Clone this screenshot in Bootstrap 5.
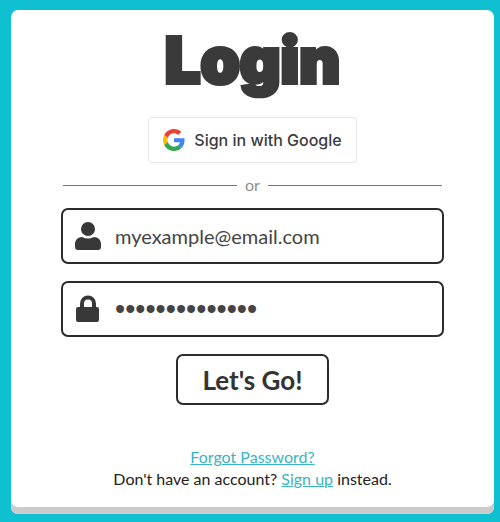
<!DOCTYPE html>
<html lang="en">
<head>
<meta charset="utf-8">
<meta name="viewport" content="width=device-width, initial-scale=1">
<title>Login</title>
<link href="https://cdn.jsdelivr.net/npm/bootstrap@5.3.0/dist/css/bootstrap.min.css" rel="stylesheet">
<style>
body{background:#0fc1d0;color:#222;font-family:Lato,"Open Sans",sans-serif;font-size:16px;line-height:22px;padding:10px 6px 8px 11px}
.login-panel{background:#fff;border-radius:7px;box-shadow:inset 0 -7px #cbcbcb;padding:18px 50px 24px}
.login-title{font-family:Inter,sans-serif;font-weight:900;font-size:63px;line-height:64px;color:#3a3a3a;-webkit-text-stroke:4px #3a3a3a;paint-order:stroke fill;margin-bottom:25px}
.google-btn{border:1px solid #e4e4e4;border-radius:4px;height:46px;padding:0 14px;gap:9px;font-family:Inter,sans-serif;font-weight:500;font-size:16px;color:#3c3c3c;background:#fff}
.divider{color:#8c8c8c;gap:8px;margin:11px 2px 12px}
.divider hr{border-color:#777;opacity:1;margin:0}
.field{border:2px solid #2b2b2b;border-radius:7px;height:56px;padding:0 12px;gap:14px;color:#383838;margin-bottom:17px}
.field input{border:0;outline:0;background:none;color:#444;font-size:20px;line-height:28px;min-width:0;padding:0}
.field input[type=password]{font-family:"Liberation Sans",sans-serif;font-size:29px;line-height:32px}
.go-btn{border:2px solid #2b2b2b;border-radius:7px;height:51px;padding:0 24px;font-weight:700;font-size:26px;line-height:30px;color:#333;background:#fff}
.foot{margin-top:41px}
.foot a{color:#38b5c3}
</style>
</head>
<body>
<main class="login-panel">
<form class="d-flex flex-column">
<h1 class="login-title text-center">Login</h1>
<button type="button" class="google-btn d-flex align-items-center align-self-center">
<svg width="22" height="22" viewBox="0 0 48 48" aria-hidden="true"><path fill="#EA4335" d="M24 9.5c3.5 0 6.7 1.2 9.2 3.6l6.9-6.9C35.9 2.4 30.5 0 24 0 14.6 0 6.5 5.4 2.6 13.2l8 6.2C12.400 13.700 17.700 9.500 24 9.500z"/><path fill="#4285F4" d="M47 24.600c0-1.600-.2-3.100-.4-4.600H24v9h12.900c-.6 3-2.300 5.500-4.800 7.200l7.700 6C44.400 38 47 31.800 47 24.600z"/><path fill="#FBBC05" d="M10.500 28.600c-.5-1.500-.8-3-.8-4.600s.3-3.100.8-4.600l-8-6.200C.9 16.500 0 20.100 0 24s.9 7.500 2.600 10.800z"/><path fill="#34A853" d="M24 48c6.500 0 11.900-2.100 15.900-5.800l-7.700-6c-2.200 1.500-4.900 2.300-8.200 2.300-6.300 0-11.600-4.200-13.500-9.900l-8 6.200C6.500 42.600 14.600 48 24 48z"/></svg>
<span>Sign in with Google</span></button>
<div class="divider d-flex align-items-center"><hr class="flex-fill"><span>or</span><hr class="flex-fill"></div>
<label class="field d-flex align-items-center">
<svg class="flex-shrink-0" width="26" height="30" viewBox="0 0 26 30" fill="currentColor" role="img" aria-label="Email"><circle cx="13" cy="8" r="7"/><path d="M7 16q6 3 12 0c4 0 7 3 7 7v3q0 3-3 3H3q-3 0-3-3v-3c0-4 3-7 7-7z"/></svg>
<input class="flex-fill" type="email" value="myexample@email.com" autocomplete="off"></label>
<label class="field d-flex align-items-center">
<svg class="flex-shrink-0" width="26" height="30" viewBox="0 0 26 30" fill="currentColor" role="img" aria-label="Password"><path fill-rule="evenodd" d="M5 13V9.500a8 8 0 0 1 16 0V13h1q2 0 2 2v11q0 2-2 2H3q-2 0-2-2V15q0-2 2-2zm4 0h8V9.500a4 4 0 0 0-8 0z"/></svg>
<input class="flex-fill" type="password" value="examplepass123" autocomplete="off"></label>
<button type="button" class="go-btn align-self-center">Let's Go!</button>
<div class="foot text-center"><a href="#">Forgot Password?</a><br>Don't have an account? <a href="#">Sign up</a> instead.</div>
</form>
</main>
<script src="https://cdn.jsdelivr.net/npm/bootstrap@5.3.0/dist/js/bootstrap.bundle.min.js"></script>
</body>
</html>
